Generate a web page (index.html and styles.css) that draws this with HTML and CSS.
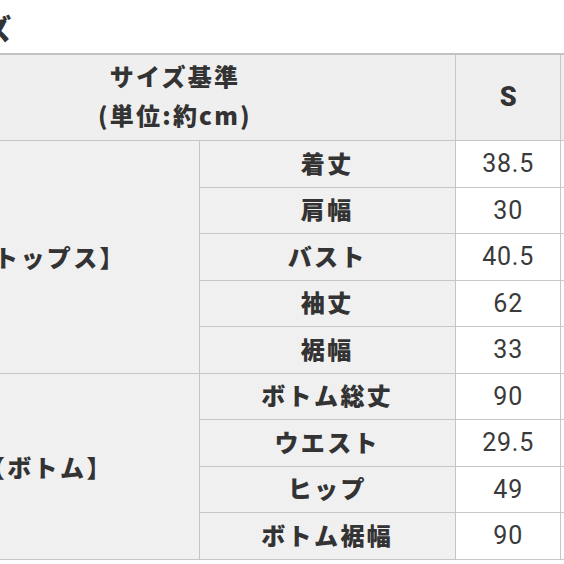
FILE: index.html
```html
<!DOCTYPE html>
<html lang="ja">
<head>
<meta charset="utf-8">
<title>サイズ</title>
<link rel="stylesheet" href="styles.css">
</head>
<body>
<div class="page">
  <h2 class="title">サイズ</h2>
  <table class="size-table">
    <colgroup>
      <col class="c-cat">
      <col class="c-item">
      <col class="c-val">
      <col class="c-val">
    </colgroup>
    <thead>
      <tr class="head-row">
        <th colspan="2" class="head head-label">サイズ基準<br>(単位:約cm)</th>
        <th class="head num-head">S</th>
        <th class="head num-head">M</th>
      </tr>
    </thead>
    <tbody>
      <tr>
        <th rowspan="5" class="cat">【トップス】</th>
        <th class="item">着丈</th>
        <td class="val">38.5</td>
        <td class="val">40</td>
      </tr>
      <tr><th class="item">肩幅</th><td class="val">30</td><td class="val">31</td></tr>
      <tr><th class="item">バスト</th><td class="val">40.5</td><td class="val">42</td></tr>
      <tr><th class="item">袖丈</th><td class="val">62</td><td class="val">63</td></tr>
      <tr><th class="item">裾幅</th><td class="val">33</td><td class="val">34</td></tr>
      <tr>
        <th rowspan="4" class="cat">【ボトム】</th>
        <th class="item">ボトム総丈</th>
        <td class="val">90</td>
        <td class="val">92</td>
      </tr>
      <tr><th class="item">ウエスト</th><td class="val">29.5</td><td class="val">31</td></tr>
      <tr><th class="item">ヒップ</th><td class="val">49</td><td class="val">51</td></tr>
      <tr><th class="item">ボトム裾幅</th><td class="val">90</td><td class="val">92</td></tr>
    </tbody>
  </table>
</div>
</body>
</html>
```

FILE: styles.css
```css
html, body {
  margin: 0;
  padding: 0;
  background: #ffffff;
  overflow: hidden;
}

.page {
  margin-left: -106px;
  color: #333333;
  font-family: "Noto Sans CJK JP", "Noto Sans", sans-serif;
}

.title {
  margin: 7px 0 4px 32px;
  font-size: 28px;
  line-height: 42px;
  font-weight: 900;
  letter-spacing: 1px;
}

.size-table {
  table-layout: fixed;
  border-collapse: collapse;
  width: 773px;
}

.c-cat { width: 303px; }
.c-item { width: 255px; }
.c-val { width: 105px; }

.size-table th,
.size-table td {
  border: 1px solid #c6c6c6;
  padding: 0;
  text-align: center;
  vertical-align: middle;
}

.head-row .head {
  height: 85px;
  background: #efefef;
  border-top: 2px solid #c2c2c2;
  font-size: 24px;
  line-height: 39px;
  font-weight: 900;
  letter-spacing: 2.2px;
}

.head-row .head-label {
  padding-bottom: 6px;
  height: 79px;
}

.head-row .num-head {
  font-family: Roboto, "Liberation Sans", sans-serif;
  font-size: 27px;
  font-weight: 900;
  letter-spacing: 0;
}

.cat,
.item {
  background: #f0f0f0;
  font-size: 24px;
  font-weight: 900;
  letter-spacing: 2.4px;
}

.item {
  height: 43.5px;
  padding-bottom: 2px;
  line-height: 28px;
}

.size-table .item {
  padding: 0 0 2px 0;
}

.val {
  background: #ffffff;
  font-family: Roboto, "Liberation Sans", sans-serif;
  font-size: 25px;
  letter-spacing: 0.8px;
  color: #3a3a3a;
}
```
